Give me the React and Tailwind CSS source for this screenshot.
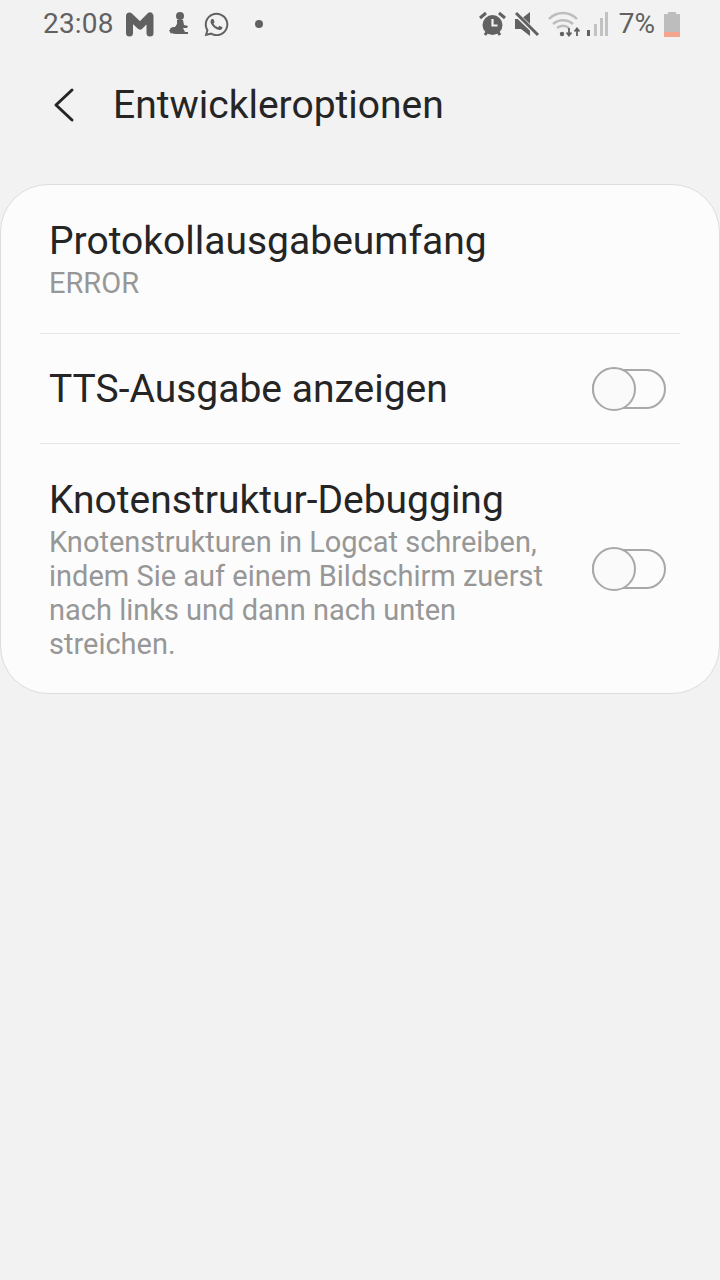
// App.jsx
import React from 'react';
import { FaWhatsapp } from 'react-icons/fa';

function Toggle() {
  return (
    <div className="relative w-[74px] h-[42px] shrink-0">
      <div className="absolute left-0 right-0 top-[1px] h-[40px] rounded-full border-2 border-[#a8a8a8]" />
      <div className="absolute left-0 top-0 w-[44px] h-[44px] -mt-[1px] rounded-full border-2 border-[#a8a8a8] bg-[#fafafa]" />
    </div>
  );
}

function StatusBar() {
  return (
    <div className="h-[48px] flex items-center pl-[43px] pr-[40px] text-[#616161]">
      <span className="text-[28px] leading-none tracking-[0.2px]">23:08</span>
      <svg className="ml-[11px]" width="30" height="26" viewBox="0 0 30 26" fill="none" stroke="#616161" strokeWidth="7" strokeLinecap="round" strokeLinejoin="round">
        <path d="M4.5 22V5L15 15L25 5V22" />
      </svg>
      <svg className="ml-[13px]" width="22" height="26" viewBox="0 0 22 26" fill="#616161">
        <circle cx="12" cy="5" r="4" />
        <path d="M9 9h6l1 5 4 1-1 2-4 0 2 4h3v2H9c-4 0-7-1-7-4s3-3 5-3l2-3z" />
        <path d="M1 19h4l-2 4z" />
      </svg>
      <FaWhatsapp className="ml-[13px]" size={27} color="#616161" />
      <div className="ml-[25px] w-[8px] h-[8px] rounded-full bg-[#616161]" />

      <div className="flex-1" />

      <svg width="27" height="26" viewBox="0 0 27 26" fill="none">
        <circle cx="13.5" cy="14" r="10" fill="#616161" />
        <path d="M13.5 8v6.5h5" stroke="#f2f2f2" strokeWidth="2.2" />
        <path d="M1 7l6-5M26 7l-6-5" stroke="#616161" strokeWidth="3" />
        <path d="M6 24l2-3M21 24l-2-3" stroke="#616161" strokeWidth="3" />
      </svg>
      <svg className="ml-[8px]" width="26" height="26" viewBox="0 0 26 26" fill="#616161">
        <path d="M1 8h6l9-7v24l-9-7H1z" />
        <path d="M1 2l23 22" stroke="#f2f2f2" strokeWidth="5" />
        <path d="M2 2l22 22" stroke="#616161" strokeWidth="3" />
      </svg>
      <svg className="ml-[8px]" width="34" height="26" viewBox="0 0 34 26" fill="none" stroke="#bdbdbd" strokeWidth="2.4">
        <path d="M1 8c8-8 20-8 28 0" />
        <path d="M5 13c6-5 14-5 20 0" />
        <path d="M9 17c3.500-3 8.500-3 12 0" />
        <circle cx="14" cy="23" r="1" fill="#616161" stroke="#616161" />
        <path d="M21 17v7M18.500 21.500l2.500 3 2.500-3" stroke="#616161" strokeWidth="1.800" />
        <path d="M29 25v-7M26.500 20.500l2.500-3 2.500 3" stroke="#616161" strokeWidth="1.800" />
      </svg>
      <svg className="ml-[4px]" width="22" height="26" viewBox="0 0 22 26">
        <rect x="1" y="19" width="3" height="6" fill="#616161" />
        <rect x="8" y="13" width="3" height="12" fill="#c2c2c2" />
        <rect x="14" y="7" width="3" height="18" fill="#c2c2c2" />
        <rect x="19" y="1" width="3" height="24" fill="#c2c2c2" />
      </svg>
      <span className="ml-[11px] text-[28px] leading-none">7%</span>
      <div className="ml-[9px] w-[16px] h-[25px] flex flex-col items-center">
        <div className="w-[8px] h-[2px] bg-[#bdbdbd]" />
        <div className="w-[16px] flex-1 bg-[#bdbdbd]" />
        <div className="w-[16px] h-[5px] bg-[#f5a58c]" />
      </div>
    </div>
  );
}

export default function App() {
  return (
    <div className="w-[720px] h-[1280px] bg-[#f2f2f2] overflow-hidden font-['Roboto',sans-serif]">
      <StatusBar />

      <div className="h-[136px] pb-[22px] flex items-center pl-[52px]">
        <svg width="24" height="36" viewBox="0 0 24 36" fill="none" stroke="#252525" strokeWidth="3" strokeLinecap="round" strokeLinejoin="round">
          <path d="M20 3L4 18L20 33" />
        </svg>
        <h1 className="ml-[37px] text-[39px] leading-none text-[#252525] font-normal">Entwickleroptionen</h1>
      </div>

      <div className="h-[510px] rounded-[48px] bg-[#fcfcfc] border border-[#dcdcdc]">
        <div className="h-[148px] pl-[48px] pt-[33px]">
          <div className="text-[39px] leading-[46px] text-[#252525]">Protokollausgabeumfang</div>
          <div className="text-[29px] leading-[34px] mt-[2px] text-[#979797]">ERROR</div>
        </div>
        <div className="mx-[39px] h-px bg-[#e6e6e6]" />
        <div className="h-[109px] flex items-center justify-between pl-[48px] pr-[53px]">
          <div className="text-[39px] leading-[46px] text-[#252525]">TTS-Ausgabe anzeigen</div>
          <Toggle />
        </div>
        <div className="mx-[39px] h-px bg-[#e6e6e6]" />
        <div className="flex items-center justify-between pl-[48px] pr-[53px] pt-[33px]">
          <div>
            <div className="text-[39px] leading-[46px] text-[#252525]">Knotenstruktur-Debugging</div>
            <div className="text-[29px] leading-[34px] mt-[2px] text-[#979797] w-[500px]">
              Knotenstrukturen in Logcat schreiben, indem Sie auf einem Bildschirm zuerst nach links und dann nach unten streichen.
            </div>
          </div>
          <Toggle />
        </div>
      </div>
    </div>
  );
}
